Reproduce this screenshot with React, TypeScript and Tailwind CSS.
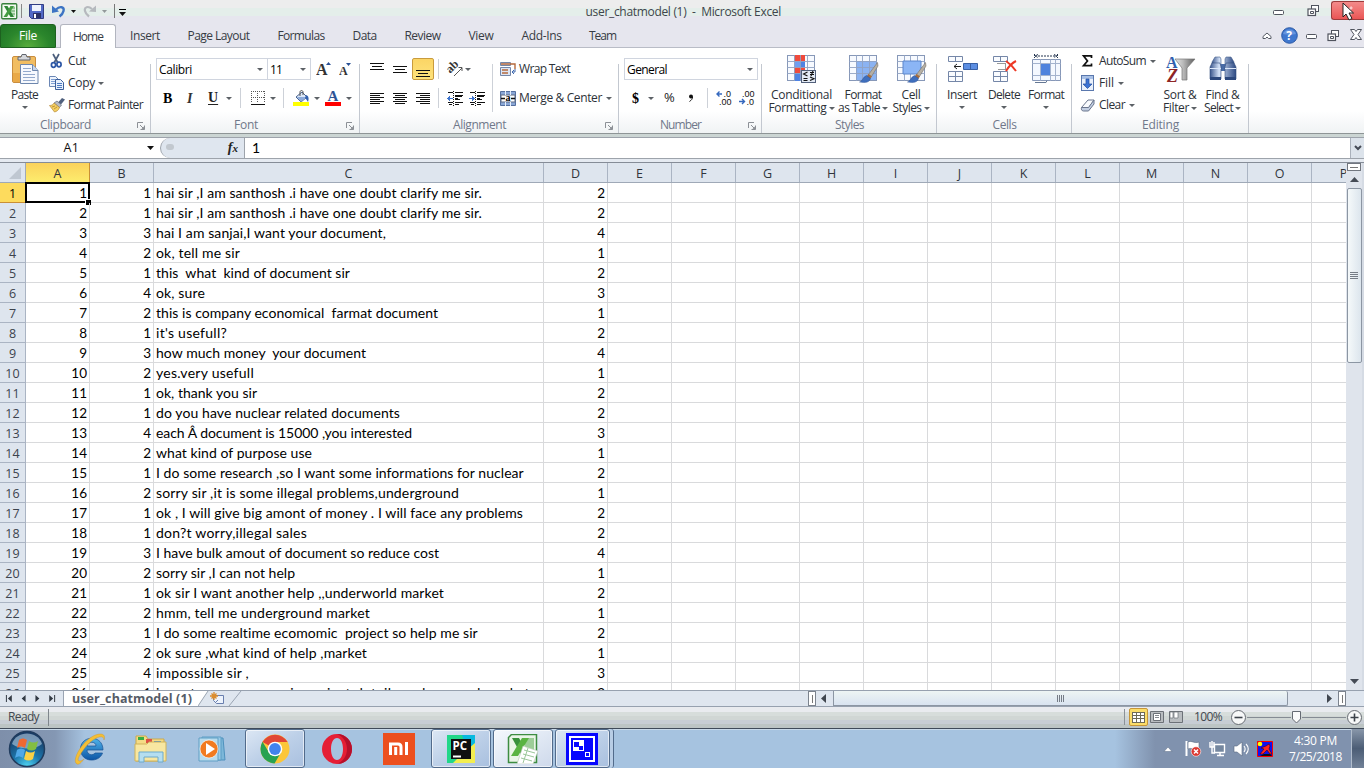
import { useLayoutEffect, useRef, useState } from "react";
import type { ReactNode } from "react";

/* Text run tracked out (or in) so that it fills a given width. */
function Fit({ w, children, className = "" }: { w: number; children: string; className?: string }) {
  const ref = useRef<HTMLSpanElement>(null);
  const [ls, setLs] = useState(0);
  useLayoutEffect(() => {
    if (ref.current) setLs((w - ref.current.getBoundingClientRect().width) / children.length);
  }, []);
  return (
    <span ref={ref} className={"inline-block shrink-0 whitespace-pre " + className} style={{ letterSpacing: ls + "px" }}>
      {children}
    </span>
  );
}

function Arrow({ className = "", dark = false }: { className?: string; dark?: boolean }) {
  return (
    <svg width="7" height="4" viewBox="0 0 7 4" preserveAspectRatio="none" className={"shrink-0 " + className}>
      <path d="M0 0h7L3.5 4z" fill={dark ? "#111" : "#5c6166"} />
    </svg>
  );
}

function Sep({ className = "" }: { className?: string }) {
  return <div className={"h-5 w-px shrink-0 bg-[#cdd1d8] " + className} />;
}

function Group({ label, width, children, launcher = false, shift = "", lw }: { label: string; width: string; children: ReactNode; launcher?: boolean; shift?: string; lw: number }) {
  return (
    <div className={"relative flex h-[85px] shrink-0 flex-col " + width}>
      <div className="flex h-[67px] shrink-0 items-start">{children}</div>
      <div className={"flex h-[20px] shrink-0 items-center justify-center text-[12px] text-[#70788a] " + shift}><Fit w={lw}>{label}</Fit></div>
      {launcher && (
        <svg className="absolute right-[6px] bottom-[3px]" width="8" height="8" viewBox="0 0 8 8">
          <path d="M.5 6V.5H6M3 3l3 3M7.5 3.5v4h-4" fill="none" stroke="#8c9096" />
          <path d="M7.5 4v3.5H4z" fill="#8c9096" />
        </svg>
      )}
      <div className="absolute top-4 right-0 bottom-0 w-px bg-[#c3c8d0]" />
    </div>
  );
}

function Lines({ y, center = false, right = false }: { y: number[]; center?: boolean; right?: boolean }) {
  return (
    <svg width="15" height="15" viewBox="0 0 15 15" shapeRendering="crispEdges" className="shrink-0">
      {y.map((v, i) => {
        const n = i % 2 ? 10 : 14;
        const x = center ? (i % 2 ? 2 : 0) : right ? (i % 2 ? 4 : 0) : 0;
        return <rect key={v} x={x} y={v} width={n} height="1" fill="#111" />;
      })}
    </svg>
  );
}

function Indent({ inward = false }: { inward?: boolean }) {
  return (
    <svg width="17" height="15" viewBox="0 0 17 15" shapeRendering="crispEdges" className="shrink-0">
      <path d="M1 1.5h5M8 1.5h8M8 4.5h8M8 5.5h7M8 8.5h5M8 7.5h3M1 11.5h5M8 11.5h8M2 13.5h3M8 13.5h4" stroke="#111" />
      <path d="M6.5 0v15" stroke="#111" strokeDasharray="1 1" />
      <path d={inward ? "M0 7h3V4.5L6 7.5l-3 3V8H0z" : "M6 7H3V4.5L0 7.5l3 3V8h3z"} fill="#3f75cf" />
    </svg>
  );
}

function GridIcon({ kind }: { kind: "cond" | "table" | "cell" }) {
  return (
    <svg width="31" height="31" viewBox="0 0 31 31" className="shrink-0">
      <rect x="1.5" y="1.5" width="27" height="25" fill="#f7faff" stroke="#8798b8" />
      {kind === "cond" && (
        <>
          <path d="M8 1h11v6H8zM8 13h11v6H8z" fill="#ef4a3c" />
          <path d="M8 7h11v6H8zM8 19h7v8H8z" fill="#4f83e3" />
          <path d="M8 7h6v6H8z" fill="#6f9df0" />
        </>
      )}
      {kind === "table" && <path d="M8 7h20v19H8z" fill="#8bb3f2" />}
      <path d="M1 7.5h28M1 13.5h28M1 19.5h28M8.5 1v26M14.5 1v26M21.5 1v26" stroke="#91a3c3" strokeWidth=".9" />
      {kind === "cell" && <path d="M7 7h18v13H7z" fill="#8bb5f5" stroke="#5b86cc" />}
      {kind === "cond" ? (
        <>
          <rect x="15.5" y="16.5" width="14" height="12" fill="#e3eaf5" stroke="#52607a" />
          <path d="M21.500 18l-4 2 4 2M17.500 24.500h4M17.500 26.500h4M24 18.500h4M24 20.500h4M24 23l4 1.700-4 1.700M25 22l2-5" stroke="#111" fill="none" strokeWidth="1.100" />
        </>
      ) : (
        <>
          <path d="M29.500 8.500l-9 12 3 2L30 12z" fill="#b5afa4" stroke="#77726c" strokeWidth=".6" />
          <path d="M20.500 20l3.500 2.500-2 2.500-3.500-2.500z" fill="#a86e3d" />
          <path d="M18.500 21.500l4 3c-1 4-5 4.500-11 3.500 3-.5 3-5 7-6.500z" fill="#3f6fbd" stroke="#2c5399" strokeWidth=".5" />
        </>
      )}
    </svg>
  );
}

function Big({ icon, a, b, wa, wb = 0, width, below = false }: { icon: ReactNode; a: string; b?: string; wa: number; wb?: number; width: string; below?: boolean }) {
  return (
    <div className={"flex shrink-0 flex-col items-center pt-[5px] " + width}>
      <div className="flex h-8 items-center">{icon}</div>
      <div className="mt-[2px] flex h-4 items-center"><Fit w={wa}>{a}</Fit></div>
      {b && (
        <div className="-mt-[3px] flex h-4 items-center gap-[2px]">
          <Fit w={wb}>{b}</Fit>
          <Arrow className="h-[3px] w-[6px]" />
        </div>
      )}
      {below && <Arrow className="mt-[3px] h-[3px] w-[6px]" />}
    </div>
  );
}

const PasteIcon = (
  <svg width="28" height="32" viewBox="0 0 28 32">
    <rect x="1.500" y="3.500" width="23" height="26" rx="1.500" fill="#f1bd62" stroke="#c98d3f" />
    <path d="M2 20h22v9H2z" fill="#e9a948" />
    <path d="M7 7V4h3l1-2.500h4L16 4h3v3z" fill="#d5d7db" stroke="#62666e" />
    <path d="M9.500 11.500h12l5.500 6v13H9.500z" fill="#f6f9fe" stroke="#6d86ad" />
    <path d="M21.500 11.500v6H27" fill="#c6d5eb" stroke="#6d86ad" />
    <path d="M12 15.500h8M12 18.500h8M12 21.500h12M12 24.500h12M12 27.500h12" stroke="#93a9cc" />
  </svg>
);

const CutIcon = (
  <svg width="15" height="16" viewBox="0 0 15 16">
    <path d="M4 1l5 9M10 1L5 10" stroke="#4d5f7d" strokeWidth="1.700" />
    <ellipse cx="4.500" cy="12" rx="2.100" ry="2.300" fill="none" stroke="#2d57a5" strokeWidth="1.700" />
    <ellipse cx="10" cy="11.500" rx="2.100" ry="2.300" fill="none" stroke="#2d57a5" strokeWidth="1.700" />
  </svg>
);
const CopyIcon = (
  <svg width="16" height="15" viewBox="0 0 16 15">
    <path d="M.5.500h6l3 3v7h-9z" fill="#eef4fd" stroke="#6b87b5" />
    <path d="M2 3.500h4M2 5.500h6M2 7.500h6" stroke="#7e9fd4" />
    <path d="M6.500 3.500h5l3 3v7h-8z" fill="#e6effc" stroke="#3b5f9b" />
    <path d="M8 7.500h5M8 9.500h5M8 11.500h5" stroke="#4c79c0" />
  </svg>
);
const BrushIcon = (
  <svg width="16" height="15" viewBox="0 0 16 15">
    <path d="M13 0l3 1.500-4 5-3-2z" fill="#51617e" />
    <path d="M8 3l4.500 4-2 2.500L5 5z" fill="#b5bac4" stroke="#636b7b" strokeWidth=".7" />
    <path d="M5 5l5.500 4.500c-1 3-3 4-5 4.500L.5 7.500C2.500 7.500 4 7 5 5z" fill="#f3cf60" stroke="#b5883a" strokeWidth=".7" />
    <path d="M3 9l3-1M5 11l3-2" stroke="#a97829" strokeWidth=".7" />
  </svg>
);
const ExcelMini = (
  <svg width="17" height="17" viewBox="0 0 17 17">
    <rect x=".75" y=".75" width="15" height="15" rx="1" fill="#f4fbf2" stroke="#36803b" strokeWidth="1.300" />
    <path d="M9 3h5v11H9z" fill="#cfe8cc" />
    <path d="M10 5h4M10 8h4M10 11h4" stroke="#5ba45f" />
    <path d="M3 3h3.500L13 14H9.500z" fill="#2e8636" />
    <path d="M9.500 3H13L6 14H2.500z" fill="#449c42" />
  </svg>
);

function Combo({ text, width, w }: { text: string; width: string; w: number }) {
  return (
    <div className={"flex h-[22px] shrink-0 items-center justify-between border border-[#d0d5df] bg-white pt-px pr-1 pl-[2px] text-black " + width}>
      <Fit w={w}>{text}</Fit>
      <Arrow className="h-[3px] w-[6px]" />
    </div>
  );
}

function Ribbon() {
  return (
    <div className="flex h-[85px] bg-linear-to-b from-white from-0% via-white via-[74%] to-[#f0f3f4] text-[12px] text-[#2c3138]">
      <Group label="Clipboard" lw={51} width="w-[151px]" launcher shift="pr-5">
        <Big icon={PasteIcon} a="Paste" wa={27} width="w-[49px]" below />
        <div className="flex flex-col pt-[2px]">
          <div className="flex h-[22px] items-center"><div className="w-[19px]">{CutIcon}</div><Fit w={18}>Cut</Fit></div>
          <div className="flex h-[22px] items-center"><div className="w-[19px]">{CopyIcon}</div><Fit w={27}>Copy</Fit><Arrow className="ml-[3px] h-[3px] w-[6px]" /></div>
          <div className="flex h-[22px] items-center"><div className="w-[19px]">{BrushIcon}</div><Fit w={75}>Format Painter</Fit></div>
        </div>
      </Group>

      <Group label="Font" lw={24} width="w-[209px]" launcher shift="pr-[19px]">
        <div className="flex flex-col pl-[5px]">
          <div className="mt-[10px] flex h-[22px] items-center">
            <Combo text="Calibri" width="w-[112px]" w={33} />
            <Combo text="11" width="-ml-px w-[44px]" w={12} />
            <svg className="ml-[5px]" width="16" height="17" viewBox="0 0 16 17"><text x="0" y="14" fontFamily="Liberation Serif" fontWeight="bold" fontSize="16" fill="#333">A</text><path d="M10 4h5l-2.500-3z" fill="#284f94" /></svg>
            <svg className="ml-[7px]" width="14" height="17" viewBox="0 0 14 17"><text x="0" y="14" fontFamily="Liberation Serif" fontWeight="bold" fontSize="12" fill="#333">A</text><path d="M7 2h5L9.500 5z" fill="#284f94" /></svg>
          </div>
          <div className="mt-[7px] flex h-[22px] items-center">
            <span className="ml-[7px] w-[23px] font-[Liberation_Serif] text-[14px] font-bold text-black">B</span>
            <span className="w-[22px] pl-px font-[Liberation_Serif] text-[14px] font-bold text-[#333] italic">I</span>
            <span className="w-[17px] font-[Liberation_Serif] text-[14px] leading-[14px] font-bold text-[#222] underline underline-offset-2">U</span>
            <Arrow className="ml-[1px] h-[3px] w-[6px]" />
            <Sep className="ml-[8px]" />
            <svg className="ml-[10px]" width="14" height="14" viewBox="0 0 14 14" shapeRendering="crispEdges"><path d="M0 .5h14M0 6.500h14M.5 0v12M6.500 0v12M13.500 0v12" stroke="#555" strokeDasharray="1 1" /><path d="M0 13.500h14" stroke="#111" /></svg>
            <Arrow className="ml-[5px] h-[3px] w-[6px]" />
            <Sep className="ml-[7px]" />
            <svg className="ml-[9px]" width="17" height="17" viewBox="0 0 17 17"><path d="M3 7l6-5 5 5-6 5z" fill="#dce8f8" stroke="#48628f" /><path d="M4 7h9l-5 5z" fill="#8caadb" /><path d="M7 6V2c0-2 3-2 3 0v3" fill="none" stroke="#555" /><path d="M13 5c3 1 3 4 2 7-1-2-2-3-3-4z" fill="#315fae" /><path d="M0 12h16v4H0z" fill="#ff0" /></svg>
            <Arrow className="ml-[4px] h-[3px] w-[6px]" />
            <svg className="ml-[5px]" width="17" height="17" viewBox="0 0 17 17"><text x="2.500" y="11" fontFamily="Liberation Serif" fontWeight="bold" fontSize="15" fill="#2f5597">A</text><path d="M0 12h16v4H0z" fill="#f00" /></svg>
            <Arrow className="ml-[4px] h-[3px] w-[6px]" />
          </div>
        </div>
      </Group>

      <Group label="Alignment" lw={53} width="w-[259px]" launcher shift="pr-5">
        <div className="flex flex-col pl-[10px]">
          <div className="mt-[10px] flex h-[22px] items-center">
            <Lines y={[1, 4, 7]} center />
            <div className="ml-2"><Lines y={[4, 7, 10]} center /></div>
            <div className="ml-1 flex h-[22px] w-[22px] items-center justify-center rounded-[2px] border border-[#c99b3d] bg-linear-to-b from-[#fbd565] to-[#fee37c] pt-1"><Lines y={[6, 9, 12]} center /></div>
            <Sep className="ml-[4px]" />
            <svg className="ml-[8px] overflow-visible" width="17" height="16" viewBox="0 0 17 16"><text transform="translate(4 12) rotate(-45)" x="-1" y="0" fontFamily="Liberation Serif" fontWeight="bold" fontSize="12" fill="#333">ab</text><path d="M7 15l8-8M11.500 6.500H15V10" fill="none" stroke="#555" /></svg>
            <Arrow className="ml-[1px] h-[3px] w-[6px]" />
          </div>
          <div className="mt-[7px] flex h-[22px] items-center">
            <Lines y={[2, 4, 6, 8, 10, 12]} />
            <div className="ml-2"><Lines y={[2, 4, 6, 8, 10, 12]} center /></div>
            <div className="ml-2"><Lines y={[2, 4, 6, 8, 10, 12]} right /></div>
            <Sep className="ml-[7px]" />
            <div className="ml-[8px]"><Indent /></div>
            <div className="ml-[5px]"><Indent inward /></div>
          </div>
        </div>
        <div className="mt-4 ml-[6px] h-12 w-px bg-[#cdd1d8]" />
        <div className="ml-[7px] flex flex-col">
          <div className="mt-[10px] flex h-[22px] items-center">
            <svg width="17" height="16" viewBox="0 0 17 16"><path d="M.5 1.500h10v3H.5zM.5 6.500h10v8H.5z" fill="#dde6f4" stroke="#7587a8" /><path d="M1 3h14v5M2 9h6M2 12h6" stroke="#b56a3c" strokeWidth="1.400" fill="none" /><path d="M15 8v3h-3l2-2M12 11l2 2" stroke="#3e69af" fill="none" /></svg>
            <Fit className="ml-[2px]" w={51}>Wrap Text</Fit>
          </div>
          <div className="mt-[7px] flex h-[22px] items-center">
            <svg width="17" height="15" viewBox="0 0 17 15"><path d="M.5.500h15v14H.5z" fill="#8aa7d6" stroke="#56709f" /><path d="M1 4h14v7H1z" fill="#fff" stroke="#5f6b82" /><path d="M5.500 0v4M10.500 0v4M5.500 11v4M10.500 11v4" stroke="#e9f0fb" /><text x="5.500" y="10" fontFamily="Liberation Serif" fontWeight="bold" fontSize="10">a</text><path d="M1 7.500h4M11 7.500h4" stroke="#111" strokeWidth="1.500" /></svg>
            <Fit className="ml-[2px]" w={83}>Merge &amp; Center</Fit>
            <Arrow className="ml-[4px] h-[3px] w-[6px]" />
          </div>
        </div>
      </Group>

      <Group label="Number" lw={41} width="w-[143px]" launcher shift="pr-5">
        <div className="flex flex-col pl-[5px]">
          <div className="mt-[10px] flex h-[22px] items-center"><Combo text="General" width="w-[134px]" w={40} /></div>
          <div className="mt-[7px] flex h-[22px] items-center">
            <span className="ml-[8px] w-4 font-[Liberation_Serif] text-[14px] font-bold text-black">$</span>
            <Arrow className="h-[3px] w-[6px]" />
            <span className="ml-[10px] w-[24px] text-[13px] font-medium text-[#222]">%</span>
            <svg width="6" height="8" viewBox="0 0 6 8"><circle cx="3" cy="2.500" r="2" fill="#111" /><path d="M4.500 3c0 2-1 3-3 4.500" fill="none" stroke="#111" /></svg>
            <Sep className="ml-[13px]" />
            <svg className="ml-2" width="17" height="16" viewBox="0 0 17 16"><text x="7.500" y="7" fontFamily="Liberation Sans" fontSize="9" fill="#111">.0</text><text x="3" y="14.500" fontFamily="Liberation Sans" fontSize="9" fill="#111">.00</text><path d="M6 4H1M3.500 1.500L1 4l2.500 2.500" stroke="#3568be" fill="none" strokeWidth="1.400" /></svg>
            <svg className="ml-[6px]" width="17" height="16" viewBox="0 0 17 16"><text x="3" y="7" fontFamily="Liberation Sans" fontSize="9" fill="#111">.00</text><text x="7.500" y="14.500" fontFamily="Liberation Sans" fontSize="9" fill="#111">.0</text><path d="M0 11.500h5M3 9l2.500 2.500L3 14" stroke="#3568be" fill="none" strokeWidth="1.400" /></svg>
          </div>
        </div>
      </Group>

      <Group label="Styles" lw={29} width="w-[175px]">
        <Big icon={<GridIcon kind="cond" />} a="Conditional" b="Formatting" wa={61} wb={58} width="ml-[5px] w-[69px]" />
        <Big icon={<GridIcon kind="table" />} a="Format" b="as Table" wa={37} wb={42} width="ml-[1px] w-[52px]" />
        <Big icon={<GridIcon kind="cell" />} a="Cell" b="Styles" wa={19} wb={29} width="ml-[1px] w-[42px]" />
      </Group>

      <Group label="Cells" lw={24} width="w-[135px]">
        <Big below a="Insert" wa={30} width="ml-[4px] w-[42px]" icon={<svg width="31" height="30" viewBox="0 0 31 30"><path d="M1.500 2.500h14v5h-14zM8.500 2.500v5M1.500 17.500h14v10h-14zM1.500 22.500h14M8.500 17.500v10" fill="#fafcff" stroke="#7587a8" /><path d="M16.500 9.500h14v6h-14zM23.500 9.500v6" fill="#5c8ee2" stroke="#3860a5" /><path d="M14 12.500H7M10 10l-3 2.500 3 2.500" fill="none" stroke="#222" /></svg>} />
        <Big below a="Delete" wa={32} width="w-[42px]" icon={<svg width="31" height="30" viewBox="0 0 31 30"><path d="M4.500 2.500h14v5h-14zM11.500 2.500v5M4.500 17.500h14v10h-14zM4.500 22.500h14M11.500 17.500v10" fill="#fafcff" stroke="#7587a8" /><path d="M8.500 9.500h8v6h-8" fill="none" stroke="#333" strokeDasharray="1 1" /><path d="M17 7c3 2 7 6 10 10M27 7c-4 2-7 5-10 10" fill="none" stroke="#ed3824" strokeWidth="2" /></svg>} />
        <Big below a="Format" wa={36} width="w-[42px]" icon={<svg width="31" height="30" viewBox="0 0 31 30"><path d="M3.500 0v4M26.500 0v4M4 2h22M7 .5L4 2l3 1.500M23 .5L26 2l-3 1.500" fill="none" stroke="#24354f" strokeDasharray="2 1" /><path d="M1.500 5.500h28v21h-28z" fill="#f4f8ff" stroke="#8798b8" /><path d="M1.500 9.500h28M1.500 21.500h28M9.500 5.500v21M19.500 5.500v21M24.500 5.500v21" stroke="#a4b3ce" /><path d="M10 10h9v11h-9z" fill="#4e82dd" /><path d="M4 28.500h11l1-2" fill="none" stroke="#667894" /></svg>} />
      </Group>

      <Group label="Editing" lw={37} width="w-[177px]">
        <div className="flex w-[87px] flex-col pt-[2px] pl-2">
          <div className="flex h-[22px] items-center"><svg width="19" height="14" viewBox="0 0 19 14"><path d="M11.500 4V1.800H3.500L7.500 7l-4 4.700h8V9.500" fill="none" stroke="#111" strokeWidth="1.700" /></svg><Fit w={47}>AutoSum</Fit><Arrow className="ml-[4px] h-[3px] w-[6px]" /></div>
          <div className="flex h-[22px] items-center"><svg width="19" height="16" viewBox="0 0 19 16"><rect x="1.500" y=".5" width="12" height="15" fill="#e9f0fb" stroke="#5a78ad" /><path d="M2 1h11v3H2z" fill="#a9c1e6" /><path d="M6 4h3v5h3l-4.500 4.500L3 9h3z" fill="#3c72d3" stroke="#234f9d" strokeWidth=".7" /></svg><Fit w={15}>Fill</Fit><Arrow className="ml-[4px] h-[3px] w-[6px]" /></div>
          <div className="flex h-[22px] items-center"><svg width="19" height="15" viewBox="0 0 19 15"><path d="M1.500 9.500L8 2h6l-5.500 8z" fill="#f9fbfe" stroke="#6b768d" /><path d="M1.500 9.500h7L14 2v4l-5.500 7h-5c-2 0-2.500-2-2-3.500z" fill="#c2cee2" stroke="#6b768d" /></svg><Fit w={26}>Clear</Fit><Arrow className="ml-[4px] h-[3px] w-[6px]" /></div>
        </div>
        <Big a="Sort &" b="Filter" wa={33} wb={26} width="w-[42px]" icon={<svg width="31" height="31" viewBox="0 0 31 31"><defs><linearGradient id="fn"><stop stopColor="#e5e5e5" /><stop offset=".4" stopColor="#bbb" /><stop offset="1" stopColor="#5d5d5d" /></linearGradient></defs><path d="M10 5h20l-8 9v12h-5V14z" fill="url(#fn)" stroke="#777" strokeWidth=".7" /><text x="1" y="13.500" fontFamily="Liberation Serif" fontWeight="bold" fontSize="16" fill="#315fae">A</text><text x="2" y="28" fontFamily="Liberation Serif" fontWeight="bold" fontStyle="italic" fontSize="18" fill="#8e2525">Z</text></svg>} />
        <Big a="Find &" b="Select" wa={34} wb={29} width="w-[43px]" icon={<svg width="30" height="30" viewBox="0 0 30 30"><defs><linearGradient id="bn"><stop stopColor="#39558c" /><stop offset=".35" stopColor="#d4e2f8" /><stop offset="1" stopColor="#2d4a83" /></linearGradient></defs><path d="M7 3h5l1 2v6H4V8zM18 3h5l3 5v3h-9V5z" fill="url(#bn)" stroke="#48618e" strokeWidth=".6" /><path d="M12 10h6v7h-6z" fill="#486ba6" /><path d="M2 13l2-4h8l1 4v12H2zM17 13l1-4h8l2 4v12H17z" fill="url(#bn)" stroke="#344d7d" strokeWidth=".6" /><path d="M2 14.500h11M17 14.500h11" stroke="#dce8fb" /><path d="M2 23h11v3H2zM17 23h11v3H17z" fill="#2c487d" /></svg>} />
      </Group>
    </div>
  );
}

const MinIcon = <svg width="13" height="7" viewBox="0 0 13 7"><rect x="1.500" y="1.500" width="10" height="4" rx="1" fill="#fff" stroke="#50545e" /></svg>;
const RestoreIcon = (
  <svg width="13" height="12" viewBox="0 0 13 12"><rect x="4.500" y=".5" width="7" height="6" fill="#fff" stroke="#50545e" /><rect x="1" y="4" width="7.500" height="6.500" fill="#fff" stroke="#50545e" strokeWidth="1.200" /><path d="M3.500 6.500h3v2h-3z" fill="none" stroke="#50545e" /></svg>
);

function Title() {
  return (
    <div className="flex h-6 shrink-0 items-center bg-[linear-gradient(#ededed_0_8px,#e4eeea_8px_16px,#e6e6ee_16px)] text-[12px] text-[#3f444c]">
      <div className="mb-[2px] flex w-[130px] shrink-0 items-center pl-px">
        {ExcelMini}
        <div className="ml-[3px] h-[14px] w-px bg-[#888]" />
        <svg className="ml-[7px]" width="15" height="15" viewBox="0 0 15 15"><path d="M.5.500h14v14h-12l-2-2z" fill="#5269c5" stroke="#323d83" /><path d="M3 1h9v6H3z" fill="#eff3fd" /><path d="M4 9h8v5H4z" fill="#2b3268" /><path d="M5 10h2v4H5z" fill="#fff" /></svg>
        <svg className="ml-[8px]" width="14" height="14" viewBox="0 0 14 14"><path d="M4 5.500C8 1.500 12.500 3 11.500 7c-.5 2.500-2 4-4 5.500" fill="none" stroke="#3d74c4" strokeWidth="2.400" /><path d="M0 1.500l7 6-7 1.500z" fill="#3d74c4" /></svg>
        <Arrow dark className="ml-[5px] h-[3px] w-[5px]" />
        <svg className="ml-[7px]" width="14" height="14" viewBox="0 0 14 14"><path d="M9 5C5 1.500 1 3 2 7c.5 2.500 2 4 4 5.500" fill="none" stroke="#b6b9be" strokeWidth="2.200" /><path d="M13 1.500l-7 6 7 .5z" fill="#b6b9be" /></svg>
        <Arrow className="ml-[5px] h-[3px] w-[5px] opacity-60" />
        <div className="ml-[7px] h-[14px] w-px bg-[#777]" />
        <div className="mt-[2px] ml-[4px] flex flex-col items-center gap-[2px]"><div className="h-px w-[7px] bg-black" /><Arrow dark /></div>
      </div>
      <div className="flex flex-1 pl-[455.500px]"><Fit w={195.5}>user_chatmodel (1)  -  Microsoft Excel</Fit></div>
      <div className="flex h-6 items-center">
        <div className="mt-px">{MinIcon}</div>
        <div className="mr-[11px] mb-[2px] ml-[22px]">{RestoreIcon}</div>
        <div className="mb-[4px] flex h-[19px] w-[33px] items-center justify-center rounded-l-[3px] border border-r-0 border-[#9c3c3c] bg-linear-to-b from-[#f38a8a] to-[#ea5555]"><svg width="11" height="9" viewBox="0 0 11 9"><path d="M2 1l7 7M9 1L2 8" stroke="#fbc9c9" strokeWidth="2.500" /></svg></div>
      </div>
    </div>
  );
}

function TabBar() {
  const tabs: [string, string, number][] = [
    ["Insert", "w-[58px]", 30], ["Page Layout", "w-[89px]", 62], ["Formulas", "w-[76px]", 47], ["Data", "w-[51px]", 24],
    ["Review", "w-[65px]", 36], ["View", "w-[52px]", 25], ["Add-Ins", "w-[69px]", 40], ["Team", "w-[53px]", 27],
  ];
  return (
    <div className="flex h-6 shrink-0 items-stretch bg-[#e6e6ee] text-[12px] text-[#373c44]">
      <div className="flex w-14 items-center justify-center rounded-t-[3px] border border-[#1d611f] bg-[radial-gradient(ellipse_at_bottom,#58ad3c,#2b862c_55%,#1e7325)] text-white"><Fit w={18}>File</Fit></div>
      <div className="w-1 border-b border-[#b9bcc6]" />
      <div className="flex w-14 items-center justify-center rounded-t-[3px] border border-b-0 border-[#b2b5bf] bg-white"><Fit w={30}>Home</Fit></div>
      {tabs.map(([t, cls, w]) => (
        <div key={t} className={"flex items-center justify-center border-b border-[#b9bcc6] pt-px " + cls}><Fit w={w}>{t}</Fit></div>
      ))}
      <div className="flex flex-1 items-center justify-end border-b border-[#b9bcc6]">
        <svg className="mt-[1px]" width="10" height="8" viewBox="0 0 10 8"><path d="M1 6.500v-2L5 1l4 3.500v2H6.500L5 5 3.500 6.500z" fill="#fff" stroke="#555a64" /></svg>
        <svg className="ml-[9px]" width="17" height="17" viewBox="0 0 17 17"><circle cx="8.500" cy="8.500" r="7.800" fill="#4078cf" stroke="#2b59a6" /><path d="M2 7c2-6 11-6 13 0-4 1-9 1-13 0z" fill="#80a9e8" opacity=".6" /><text x="5.200" y="13" fontFamily="Open Sans" fontWeight="bold" fontSize="12" fill="#fff">?</text></svg>
        <div className="mt-[2px] ml-[7px]">{MinIcon}</div>
        <div className="ml-[9px]">{RestoreIcon}</div>
        <svg className="mb-[2px] mr-[2px] ml-[10px]" width="12" height="11" viewBox="0 0 12 11"><path d="M.5.500h4L6 2.500 7.500.500h4L8 5.500l3.500 5h-4L6 8.500l-1.500 2h-4L4 5.500z" fill="#fff" stroke="#50545e" /></svg>
      </div>
    </div>
  );
}

function FormulaBar() {
  return (
    <div className="flex h-[22px] shrink-0 border-y border-[#9da3ab] bg-white">
      <div className="flex w-[160px] items-center text-[12.500px] text-[#111]"><div className="w-[143px] pt-px text-center"><Fit w={16}>A1</Fit></div><Arrow dark className="ml-1" /></div>
      <div className="flex w-[85px] items-center justify-between rounded-l-[10px] border-r border-[#9da3ab] border-l bg-[#dfe6ef] pr-[6px] pl-[5px]">
        <div className="mb-[3px] h-[6px] w-2 rounded-full bg-[#c2c8cf]" />
        <span className="font-[Liberation_Serif] text-[14px] leading-none font-bold text-[#222] italic">f<span className="text-[11px]">x</span></span>
      </div>
      <div className="flex-1 pl-[7px] font-[Lato] text-[14px] leading-[20px] text-black">1</div>
      <div className="flex w-[14px] items-center justify-center border-l border-[#aab1bb] bg-[#dce3eb]"><svg width="8" height="6" viewBox="0 0 8 6"><path d="M1 1l3 3 3-3" fill="none" stroke="#444a55" strokeWidth="2" /></svg></div>
    </div>
  );
}

const rows: [number, string, number, number][] = [
  [1, "hai sir ,I am santhosh .i have one doubt clarify me sir.", 2, 326],
  [1, "hai sir ,I am santhosh .i have one doubt clarify me sir.", 2, 326],
  [3, "hai I am sanjai,I want your document,", 4, 230],
  [2, "ok, tell me sir", 1, 84],
  [1, "this  what  kind of document sir", 2, 194],
  [4, "ok, sure", 3, 49],
  [2, "this is company economical  farmat document", 1, 282],
  [1, "it's usefull?", 2, 71],
  [3, "how much money  your document", 4, 210],
  [2, "yes.very usefull", 1, 98],
  [1, "ok, thank you sir", 2, 101],
  [1, "do you have nuclear related documents", 2, 244],
  [4, "each Â document is 15000 ,you interested", 3, 256],
  [2, "what kind of purpose use", 1, 156],
  [1, "I do some research ,so I want some informations for nuclear", 2, 368],
  [2, "sorry sir ,it is some illegal problems,underground", 1, 303],
  [1, "ok , I will give big amont of money . I will face any problems", 2, 367],
  [1, "don?t worry,illegal sales", 2, 151],
  [3, "I have bulk amout of document so reduce cost", 4, 283],
  [2, "sorry sir ,I can not help", 1, 139],
  [1, "ok sir I want another help ,,underworld market", 2, 288],
  [2, "hmm, tell me underground market", 1, 214],
  [1, "I do some realtime ecomomic  project so help me sir", 2, 322],
  [2, "ok sure ,what kind of help ,market", 1, 211],
  [4, "impossible sir ,", 3, 93],
  [1, "i want some economic project details and secured market", 2, 374],
];
const cols = "ABCDEFGHIJKLMNOP".split("");

function Sheet() {
  return (
    <div className="h-[527px] w-[1346px] overflow-hidden bg-white">
      <div className="flex h-5 w-[1380px] border-b border-[#9fa9b7] bg-[#dee5ee] text-[12.500px] text-[#30353c]">
        <div className="flex w-[26px] items-end justify-end border-r border-[#9fa9b7] pr-[4px] pb-[3px]"><svg width="12" height="12" viewBox="0 0 12 12"><path d="M12 0v12H0z" fill="#bfc7d1" /></svg></div>
        {cols.map((c) => (
          <div key={c} className={"flex shrink-0 items-center justify-center border-r pt-[3px] " + (c === "C" ? "w-[390px] " : "w-[64px] ") + (c === "A" ? "border-[#c98f35] bg-linear-to-b from-[#fbd25c] to-[#fdec6d]" : "border-[#aab4c3]")}>{c}</div>
        ))}
      </div>
      {rows.map(([b, text, d, w], i) => (
        <div key={i} className="flex h-5 w-[1380px] font-[Lato] text-[13.500px] leading-[21px] text-black">
          <div className={"w-[26px] shrink-0 border-r border-b text-center font-['Open_Sans'] text-[12.500px] " + (i === 0 ? "border-[#c98f35] bg-[#fddb5d]" : "border-[#aab4c3] bg-[#dee5ee] text-[#3c434d]")}>{i + 1}</div>
          <div className="relative w-16 shrink-0 border-r border-b border-[#d9dadc] pr-[2px] text-right">
            {i + 1}
            {i === 0 && (
              <div className="absolute -inset-x-px -top-px -bottom-px border-2 border-black"><div className="absolute -right-[3px] -bottom-[4px] h-[6px] w-[6px] border-t border-l border-white bg-black" /></div>
            )}
          </div>
          <div className="w-16 shrink-0 border-r border-b border-[#d9dadc] pr-[2px] text-right">{b}</div>
          <div className="w-[390px] shrink-0 border-r border-b border-[#d9dadc] pl-[2px] text-[14px] leading-[19px]"><Fit w={w}>{text}</Fit></div>
          <div className="w-16 shrink-0 border-r border-b border-[#d9dadc] pr-[2px] text-right">{d}</div>
          {cols.slice(4).map((c) => <div key={c} className="w-16 shrink-0 border-r border-b border-[#d9dadc]" />)}
        </div>
      ))}
    </div>
  );
}

function VScroll() {
  return (
    <div className="flex w-[18px] shrink-0 flex-col items-center border-r-2 border-[#d5dbe4] bg-[#dfe4ec]">
      <div className="flex h-[8px] w-[14px] shrink-0 items-center justify-center border border-[#71767f] bg-white"><div className="h-px w-[8px] bg-[#777]" /></div>
      <svg className="mt-[6px]" width="9" height="5" viewBox="0 0 9 5"><path d="M0 5h9L4.500 0z" fill="#454b55" /></svg>
      <div className="mt-[6px] flex h-[175px] w-[15px] flex-col items-center justify-center gap-px rounded-[2px] border border-[#8c96a3] bg-linear-to-r from-[#f5f9fa] to-[#dce5ed]">
        {[0, 1, 2, 3].map((n) => <div key={n} className="h-px w-[8px] bg-[#757c86]" />)}
      </div>
      <svg className="mt-auto mb-[6px]" width="9" height="5" viewBox="0 0 9 5"><path d="M0 0h9L4.500 5z" fill="#454b55" /></svg>
    </div>
  );
}

function SheetTabs() {
  return (
    <div className="flex h-[17px] shrink-0 border-t border-b border-[#97a1af] bg-[#dfe6ef]">
      <svg width="64" height="15" viewBox="0 0 64 15" className="shrink-0 border-r border-[#9aa4b2]"><path d="M6 4v7h1V4zM12 4v7L8 7.500zM26 4v7l-4-3.500zM36 4v7l4-3.500zM50 4v7l4-3.500zM55 4v7h1V4z" fill="#333a44" /></svg>
      <div className="flex h-[15px] w-[134px] items-center bg-white pt-[2px] pl-[8px] font-['Open_Sans'] text-[12.500px] font-bold text-[#555b66]"><Fit w={120}>user_chatmodel (1)</Fit></div>
      <svg width="44" height="15" viewBox="0 0 44 15" className="shrink-0"><path d="M0 0h10L0 15z" fill="#fff" /><path d="M0 15L10 0M31 15L43 0" stroke="#9aa4b2" /><path d="M15.500 4.500h10v8h-7l-3-3z" fill="#edf3fc" stroke="#697fae" /><path d="M17 12l3-3" stroke="#697fae" /><path d="M16 1v8M12 5h8M13.500 2.500l5 5M18.500 2.500l-5 5" stroke="#dc8c2b" strokeWidth="1.300" /></svg>
      <div className="w-[566px] shrink-0" />
      <div className="flex h-[15px] w-[8px] shrink-0 items-center justify-center border border-[#7c838e] bg-white"><div className="h-2 w-px bg-[#777]" /></div>
      <div className="flex w-[17px] shrink-0 items-center justify-center pr-[2px]"><svg width="5" height="9" viewBox="0 0 5 9"><path d="M5 0v9L0 4.500z" fill="#40464f" /></svg></div>
      <div className="flex w-[455px] shrink-0 items-center justify-center gap-px rounded-r-[2px] border border-t-0 border-[#8c96a3] bg-linear-to-b from-[#eef5f4] to-[#d9e3f0]">
        {[0, 1, 2, 3].map((n) => <div key={n} className="h-[7px] w-px bg-[#757c86]" />)}
      </div>
      <svg className="mt-[3px] ml-[39px] shrink-0" width="5" height="9" viewBox="0 0 5 9"><path d="M0 0v9l5-4.500z" fill="#40464f" /></svg>
      <div className="ml-[6px] flex h-[15px] w-[8px] shrink-0 items-center justify-center border border-[#7c838e] bg-white"><div className="h-2 w-px bg-[#777]" /></div>
    </div>
  );
}

function StatusBar() {
  const circle = (plus: boolean) => (
    <svg width="17" height="17" viewBox="0 0 17 17" className="shrink-0"><circle cx="8.500" cy="8.500" r="7" fill="#f7f8f8" stroke="#666b72" /><path d={plus ? "M4.500 8.500h8M8.500 4.500v8" : "M4.500 8.500h8"} stroke="#3d434b" strokeWidth="1.600" /></svg>
  );
  return (
    <div className="flex h-[21px] shrink-0 items-center bg-[linear-gradient(#e9ebef_0_5px,#d7dddb_5px_9px,#d0d6d4_9px_13px,#c7cdd4_13px_17px,#bcc4c4_17px)] pb-px text-[12px] text-[#42474f]">
      <div className="flex h-[17px] w-[49px] items-center border-r border-[#7f868c] pl-2"><Fit w={31}>Ready</Fit></div>
      <div className="flex-1" />
      <div className="h-4 w-px bg-[#8a9198]" />
      <div className="ml-[4px] flex h-[18px] w-[19px] items-center justify-center rounded-[2px] border border-[#c79639] bg-[#fbdd69]"><svg width="13" height="11" viewBox="0 0 13 11" shapeRendering="crispEdges"><path d="M0 0h13v11H0z" fill="#6d6a58" /><path d="M1 1h3v2H1zM5 1h3v2H5zM9 1h3v2H9zM1 4h3v2H1zM5 4h3v2H5zM9 4h3v2H9zM1 7h3v3H1zM5 7h3v3H5zM9 7h3v3H9z" fill="#fff" /></svg></div>
      <svg className="ml-[2px]" width="14" height="12" viewBox="0 0 14 12"><path d="M.5.500h13v11H.5z" fill="#b9bdc0" stroke="#6c7177" /><path d="M3.500 2.500h7v7h-7z" fill="#fff" stroke="#6c7177" /><path d="M5 4.500h4M5 6.500h4" stroke="#858a90" /></svg>
      <svg className="ml-[5px]" width="14" height="12" viewBox="0 0 14 12"><path d="M.5.500h13v11H.5z" fill="#b9bdc0" stroke="#6c7177" /><path d="M1 1h3v6H1zM5 1h4v6H5z" fill="#fff" stroke="#6c7177" strokeWidth=".7" /></svg>
      <Fit className="ml-[11px]" w={28}>100%</Fit>
      <div className="ml-[8px]">{circle(false)}</div>
      <div className="h-px w-[44px] bg-[#858b93]" />
      <svg width="11" height="13" viewBox="0 0 11 13"><path d="M1.500.500h8v7.500L5.500 12l-4-4z" fill="#fafafa" stroke="#666b73" /></svg>
      <div className="h-px w-[44px] bg-[#858b93]" />
      <div className="mr-px">{circle(true)}</div>
    </div>
  );
}

function TaskButton({ children, bright = false, className = "w-[60px]" }: { children: ReactNode; bright?: boolean; className?: string }) {
  return (
    <div className={"flex h-[39px] shrink-0 items-center justify-center rounded-[3px] border border-[#526b8b] shadow-[inset_0_0_0_1px_#ffffff99] " + (bright ? "bg-linear-to-br from-[#f4f8fd] to-[#ced9eb] " : "bg-linear-to-br from-[#dce7f4] via-[#bdd0e8] to-[#a9c0df] ") + className}>{children}</div>
  );
}

function Taskbar() {
  return (
    <div className="flex h-10 shrink-0 items-center border-t border-[#3f4a59] bg-[linear-gradient(90deg,#7e8faa_0,#8497b3_55px,#a6c3e0_85px,#a6c3e0_1115px,#8092ae_1155px,#8092ae)] shadow-[inset_0_1px_0_#c8d9ea]">
      <svg className="ml-2 shrink-0" width="38" height="38" viewBox="0 0 38 38"><defs><radialGradient id="orb" cx=".5" cy="1" r=".9"><stop stopColor="#50d6f4" /><stop offset=".45" stopColor="#1d77ac" /><stop offset="1" stopColor="#173b66" /></radialGradient></defs><circle cx="19" cy="19" r="17.500" fill="url(#orb)" stroke="#203c5e" strokeWidth="1.500" /><path d="M4 14C8 0 30 0 34 14c-7 6-22 6-30 0z" fill="#b8d0e4" opacity=".6" /><path d="M11 10c3-2 5-2 8 0l-2 8c-3-2-5-2-8 0z" fill="#ef6932" /><path d="M21 11c3 2 6 2 9 0l-2 8c-3 2-6 2-9 0z" fill="#83be42" /><path d="M9 20c3-2 5-2 8 0l-2 8c-3-2-5-2-8 0z" fill="#4fa8e8" /><path d="M18 21c3 2 6 2 9 0l-2 8c-3 2-6 2-9 0z" fill="#fbd145" /></svg>
      <svg className="ml-[27px] shrink-0" width="34" height="34" viewBox="0 0 34 34"><defs><linearGradient id="ie" x2="0" y2="1"><stop stopColor="#4fb4ea" /><stop offset="1" stopColor="#0d55a5" /></linearGradient></defs><path fillRule="evenodd" d="M30 18H14c0 5 6 6 8 3h7.500c-3 10-22 10-22-4C7.500 3 30 2 30 18zM14 14h9c0-5-8-5-9 0z" fill="url(#ie)" stroke="#185293" strokeWidth=".7" /><path d="M4 32C-3 29 12 3 27 2c5 0 5 3 4 6 0-7-12-2-20 9-5 7-8 12-4 12 1 0 3-1 4-2-2 3-5 6-7 5z" fill="#f4bf36" stroke="#ca932d" strokeWidth=".4" /></svg>
      <svg className="ml-[27px] shrink-0" width="34" height="30" viewBox="0 0 34 30"><path d="M2 5V2h10l2 3h16v22H2z" fill="#f5dc85" stroke="#cba94f" /><path d="M4 3h6v3H4z" fill="#38ad43" /><path d="M12 5h6v4h-6z" fill="#de5144" /><path d="M20 7h7v3h-7z" fill="#3d8ed9" /><path d="M1 10h12l2-2h17v19H1z" fill="#f8e7a1" stroke="#d0b35b" /><path d="M5 28V18h24v10h-5v-5H10v5z" fill="#b5def0" stroke="#6caacd" /></svg>
      <svg className="ml-[30px] shrink-0" width="30" height="28" viewBox="0 0 30 28"><path d="M6 3h19l2 22H8z" fill="#7cb7d9" stroke="#4e91bd" /><path d="M4 2h19v23H4z" fill="#9acbe7" stroke="#5c9dc5" /><path d="M1 3h19v23H1z" fill="#b9dced" stroke="#609fc5" /><circle cx="11" cy="14" r="9" fill="#f17b20" stroke="#fff" strokeWidth=".6" /><path d="M8 8l9 6-9 6z" fill="#fff" /></svg>
      <TaskButton className="ml-[17px] w-[60px]"><svg width="30" height="30" viewBox="0 0 30 30"><circle cx="15" cy="15" r="14.500" fill="#fbc63a" /><path d="M15 15L2.500 8A14.500 14.500 0 0 1 27.600 8H15z" fill="#e14736" /><path d="M2.500 7.700A14.500 14.500 0 0 0 14.500 29.500L21 18.500 9 18.500z" fill="#28a252" /><circle cx="15" cy="15" r="7.300" fill="#fff" /><circle cx="15" cy="15" r="5.900" fill="#4283ed" /></svg></TaskButton>
      <svg className="ml-[17px] shrink-0" width="30" height="32" viewBox="0 0 30 32"><path fillRule="evenodd" d="M15 1a15 15 0 1 0 0 30 15 15 0 0 0 0-30zM15 5c3.500 0 6 4.500 6 11s-2.500 11-6 11-6-4.500-6-11S11.500 5 15 5z" fill="#e51e35" /><path d="M15 1c9 0 15 7 15 15s-6 15-15 15c5-2 10-7 10-15S20 3 15 1z" fill="#b60f2a" /></svg>
      <div className="ml-[31px] flex h-8 w-8 shrink-0 items-center justify-center bg-[#ec4f1e]"><svg width="20" height="13" viewBox="0 0 20 13"><path d="M1.500 13V2H9c2 0 3 1 3 3v8M6.700 5v8M17.500 0v13" fill="none" stroke="#fff" strokeWidth="3" /></svg></div>
      <TaskButton className="ml-[16px] w-[60px]"><svg width="28" height="28" viewBox="0 0 28 28"><path d="M0 0h28v28H0z" fill="#21d789" /><path d="M15 0h13v10L20 15z" fill="#08b9df" /><path d="M28 8v20H6l8-8z" fill="#f3ee50" /><path d="M4 4h20v20H4z" fill="#111" /><text x="5.500" y="14.500" fontFamily="Open Sans" fontWeight="bold" fontSize="11.500" fill="#fff">PC</text><path d="M6 20.500h8v2H6z" fill="#fff" /></svg></TaskButton>
      <TaskButton bright className="ml-[2px] w-[60px]"><svg width="32" height="30" viewBox="0 0 32 30"><path d="M1.500 3.500l3-3h25v28h-28z" fill="#eaf5e7" stroke="#3d8d41" strokeWidth="1.500" /><path d="M18 4h9v20h-9z" fill="#9dcd98" /><path d="M5 4h7l10 18h-7z" fill="#39913b" /><path d="M15 4h7L11 22H4z" fill="#5ab342" /><path d="M16 12l15 5-5 13H10z" fill="#fff" stroke="#b8c7b6" strokeWidth=".6" /><path d="M17 16l11 3M16 20l11 3M14 24l11 3M21 14l-5 15" stroke="#9cc79a" /></svg></TaskButton>
      <TaskButton className="ml-[2px] w-[55px]"><svg className="mr-px" width="32" height="32" viewBox="0 0 32 32" shapeRendering="crispEdges"><path d="M0 0h32v32H0z" fill="#0606ff" /><path d="M4 4h24v24H4z" fill="none" stroke="#fff" strokeWidth="2" /><path d="M7 7h11v11H7z" fill="#fff" /><path d="M8 9h5v5H8zM13 13h4v4h-4z" fill="#0606ff" /><path d="M19.500 19.500h4v4h-4z" fill="none" stroke="#fff" /></svg></TaskButton>
      <div className="h-[39px] w-1 rounded-r-[3px] border-r border-[#526b8b] bg-[#b8cde5]" />
      <div className="flex-1" />
      <svg width="10" height="6" viewBox="0 0 10 6"><path d="M1 5.500h8L5 1z" fill="#fff" stroke="#596b84" strokeWidth=".5" /></svg>
      <svg className="ml-[11px]" width="18" height="17" viewBox="0 0 18 17"><path d="M2.500 1v15" stroke="#fff" strokeWidth="2" /><path d="M4 2c4-2 6 2 11 0v7c-5 2-7-2-11 0z" fill="#fff" stroke="#58687f" strokeWidth=".6" /><circle cx="12" cy="11.500" r="4.800" fill="#dc3932" stroke="#fff" strokeWidth=".6" /><path d="M10 9.500l4 4M14 9.500l-4 4" stroke="#fff" strokeWidth="1.500" /></svg>
      <svg className="ml-[7px]" width="17" height="16" viewBox="0 0 17 16"><path d="M5.500 3.500h10v8h-10z" fill="#75879f" stroke="#fff" strokeWidth="1.400" /><path d="M8 14.500h7M11 12v2" stroke="#fff" strokeWidth="1.500" /><path d="M1 1v5h4V1M3 0v12h3" fill="none" stroke="#fff" strokeWidth="1.400" /></svg>
      <svg className="ml-[7px]" width="17" height="16" viewBox="0 0 17 16"><path d="M1 5h3l5-4v14l-5-4H1z" fill="#fff" stroke="#596981" strokeWidth=".6" /><path d="M11 5c1.500 2 1.500 4 0 6M13 3c3 3 3 7 0 10" fill="none" stroke="#fff" strokeWidth="1.100" /></svg>
      <svg className="ml-[7px]" width="16" height="16" viewBox="0 0 16 16"><path d="M.5.500h15v15H.5z" fill="#1010ef" stroke="#f00" /><circle cx="3" cy="3" r="2.300" fill="#ff0" /><path d="M12 3l-3 2-5 2 3 1-4 5h3l4-4 3 4h2l-3-5 1-3z" fill="#f22" stroke="#300" strokeWidth=".5" /><path d="M3 15l4-2h6l2 2z" fill="#111" /></svg>
      <div className="ml-[16px] flex w-[53px] flex-col items-center text-[12px] leading-4 text-white"><Fit w={43}>4:30 PM</Fit><Fit w={53}>7/25/2018</Fit></div>
      <div className="ml-[9px] h-[39px] w-[13px] border-l border-[#b1bdcc] bg-linear-to-b from-[#8997aa] via-[#4c5d75] to-[#718197]" />
    </div>
  );
}

export default function App() {
  return (
    <div className="relative flex h-[768px] w-[1364px] flex-col overflow-hidden bg-[#d5dddc] font-['Open_Sans',sans-serif]">
      <Title />
      <TabBar />
      <Ribbon />
      <div className="h-1 shrink-0 border-t border-[#8e9596] bg-[#cbd5d3]" />
      <FormulaBar />
      <div className="h-1 shrink-0 border-b border-[#858c97] bg-[#e5eaf1]" />
      <div className="flex h-[527px] shrink-0"><Sheet /><VScroll /></div>
      <SheetTabs />
      <StatusBar />
      <Taskbar />
      <svg className="absolute top-[2px] left-[1342px]" width="14" height="20" viewBox="0 0 14 20"><path d="M1 1v14l3-3 3 6 3-1.500-3-5.500h4.500z" fill="#fff" stroke="#222" /></svg>
    </div>
  );
}
